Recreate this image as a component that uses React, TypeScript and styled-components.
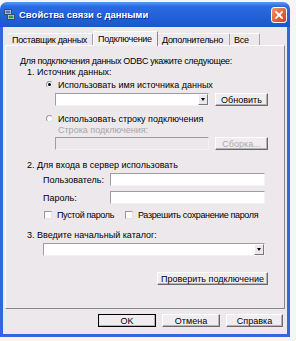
import styled, { createGlobalStyle } from 'styled-components'

const GlobalStyle = createGlobalStyle`
  html, body {
    margin: 0;
    padding: 0;
    background: #f6f4f6;
  }
  body {
    font-family: 'Liberation Sans', Arial, sans-serif;
    font-size: 9px;
    color: #000;
  }
`

const Page = styled.div`
  width: 296px;
  height: 341px;
  padding-top: 2px;
  box-sizing: border-box;
`

const Window = styled.div`
  width: 290px;
  height: 335px;
  display: flex;
  flex-direction: column;
`

const TitleBar = styled.div`
  height: 25px;
  flex: 0 0 25px;
  border-radius: 7px 7px 0 0;
  background: linear-gradient(180deg, #5a98f2 0%, #2c6ae0 18%, #2160d8 60%, #1c56cc 100%);
  display: flex;
  align-items: center;
  padding: 0 4px 0 4px;
  box-sizing: border-box;
`

const TitleText = styled.div`
  flex: 1 1 auto;
  margin-left: 4px;
  color: #fff;
  font-weight: bold;
  font-size: 9.5px;
  text-shadow: 1px 1px 0 #0c2f90;
`

const CloseButton = styled.div`
  width: 14px;
  height: 14px;
  border: 1px solid #fff;
  border-radius: 3px;
  background: linear-gradient(135deg, #f4946c 0%, #e4603a 55%, #cc4420 100%);
  display: flex;
  align-items: center;
  justify-content: center;
  margin-right: -1px;
`

const Body = styled.div`
  flex: 1 1 auto;
  background: #ece8ec;
  border: 3px solid #3466de;
  border-top: 0;
  display: flex;
  flex-direction: column;
  padding: 4px 2px 0 2px;
`

const TabRow = styled.div`
  display: flex;
  align-items: flex-end;
  height: 14px;
  margin-left: 3px;
  position: relative;
  z-index: 1;
  letter-spacing: -0.3px;
`

const Tab = styled.div<{ $active?: boolean; $width: number }>`
  width: ${(p) => p.$width}px;
  height: ${(p) => (p.$active ? 15 : 12)}px;
  margin-bottom: ${(p) => (p.$active ? -1 : 0)}px;
  padding: 0 3px 0 4px;
  display: flex;
  align-items: center;
  background: ${(p) => (p.$active ? '#f2eff2' : '#ece8ec')};
  border-top: 1px solid #fff;
  border-left: ${(p) => (p.$active ? '1px solid #fff' : '0')};
  border-right: 1px solid ${(p) => (p.$active ? '#8a878a' : '#a8a5a8')};
  box-sizing: border-box;
  white-space: nowrap;
  overflow: hidden;
`

const Panel = styled.div`
  height: 264px;
  border: 1px solid #fff;
  border-right-color: #8a878a;
  border-bottom-color: #8a878a;
  box-sizing: border-box;
  padding: 10px 16px 0 14px;
  display: flex;
  flex-direction: column;
`

const Line = styled.div<{ $indent?: number; $top?: number; $gray?: boolean; $tight?: boolean }>`
  height: 11px;
  line-height: 11px;
  margin-left: ${(p) => p.$indent ?? 0}px;
  margin-top: ${(p) => p.$top ?? 0}px;
  color: ${(p) => (p.$gray ? '#a9a6a9' : '#000')};
  letter-spacing: ${(p) => (p.$tight ? '-0.3px' : 'normal')};
  white-space: nowrap;
`

const Row = styled.div<{ $indent?: number; $top?: number; $right?: number }>`
  display: flex;
  align-items: center;
  gap: 6px;
  height: 13px;
  margin-left: ${(p) => p.$indent ?? 0}px;
  margin-right: ${(p) => p.$right ?? 0}px;
  margin-top: ${(p) => p.$top ?? 0}px;
`

const OptionRow = styled.label<{ $indent?: number; $top?: number; $tight?: boolean }>`
  display: flex;
  align-items: center;
  height: 11px;
  margin-left: ${(p) => p.$indent ?? 0}px;
  margin-top: ${(p) => p.$top ?? 0}px;
  letter-spacing: ${(p) => (p.$tight ? '-0.35px' : 'normal')};
  white-space: nowrap;
`

const Radio = styled.span<{ $checked?: boolean }>`
  flex: 0 0 auto;
  width: 7px;
  height: 7px;
  border-radius: 50%;
  background: #fff;
  border: 1px solid #9a979a;
  border-bottom-color: #e4e2e4;
  border-right-color: #e4e2e4;
  box-sizing: border-box;
  margin-right: 5px;
  display: flex;
  align-items: center;
  justify-content: center;

  &::after {
    content: '';
    width: 3px;
    height: 3px;
    border-radius: 50%;
    background: ${(p) => (p.$checked ? '#000' : 'transparent')};
  }
`

const Checkbox = styled.span<{ $gap?: number }>`
  flex: 0 0 auto;
  width: 8px;
  height: 8px;
  background: #fff;
  border: 1px solid #9a979a;
  border-bottom-color: #e4e2e4;
  border-right-color: #e4e2e4;
  box-sizing: border-box;
  margin-left: ${(p) => p.$gap ?? 0}px;
  margin-right: 5px;
`

const Field = styled.div<{ $disabled?: boolean }>`
  flex: 1 1 auto;
  height: 13px;
  background: ${(p) => (p.$disabled ? '#ece8ec' : '#fff')};
  border: 1px solid #a09da0;
  border-right-color: #f4f2f4;
  border-bottom-color: #f4f2f4;
  box-sizing: border-box;
  display: flex;
  justify-content: flex-end;
`

const DropArrow = styled.div`
  width: 10px;
  height: 11px;
  background: #ece8ec;
  border-left: 1px solid #fff;
  border-top: 1px solid #fff;
  border-right: 1px solid #7a777a;
  border-bottom: 1px solid #7a777a;
  box-sizing: border-box;
  display: flex;
  align-items: center;
  justify-content: center;

  &::after {
    content: '';
    border-left: 2.5px solid transparent;
    border-right: 2.5px solid transparent;
    border-top: 3px solid #000;
  }
`

const Button = styled.div<{ $width?: number; $disabled?: boolean; $default?: boolean }>`
  width: ${(p) => p.$width ?? 53}px;
  height: 13px;
  flex: 0 0 auto;
  padding: 0 4px;
  box-sizing: border-box;
  display: flex;
  align-items: center;
  justify-content: center;
  background: #f0edf0;
  color: ${(p) => (p.$disabled ? '#aaa7aa' : '#000')};
  border: 1px solid;
  border-color: ${(p) => (p.$default ? '#000' : '#fff #6c696c #6c696c #fff')};
  box-shadow: inset -1px -1px 0 #b6b3b6;
  white-space: nowrap;
`

const FieldLabel = styled.div`
  width: 61px;
  flex: 0 0 auto;
  white-space: nowrap;
`

const Actions = styled.div<{ $top?: number }>`
  display: flex;
  justify-content: flex-end;
  margin-top: ${(p) => p.$top ?? 0}px;
`

const Footer = styled.div`
  display: flex;
  justify-content: flex-end;
  gap: 6px;
  padding: 5px 2px 0 0;
`

const AppIcon = () => (
  <svg width="11" height="11" viewBox="0 0 11 11">
    <rect x="0.5" y="0.5" width="7" height="5" fill="#d8e4f4" stroke="#3a4a6a" />
    <rect x="1.5" y="1.5" width="5" height="3" fill="#4a78c8" />
    <rect x="3.5" y="5.5" width="7" height="5" fill="#e8ecf0" stroke="#3a4a6a" />
    <rect x="4.5" y="6.5" width="5" height="3" fill="#2a9a4a" />
  </svg>
)

const CloseIcon = () => (
  <svg width="8" height="8" viewBox="0 0 8 8">
    <path d="M1 1 L7 7 M7 1 L1 7" stroke="#fff" strokeWidth="1.8" strokeLinecap="square" />
  </svg>
)

const App = () => {
  return (
    <Page>
      <GlobalStyle />
      <Window>
        <TitleBar>
          <AppIcon />
          <TitleText>Свойства связи с данными</TitleText>
          <CloseButton>
            <CloseIcon />
          </CloseButton>
        </TitleBar>
        <Body>
          <TabRow>
            <Tab $width={85}>Поставщик данных</Tab>
            <Tab $width={65} $active>
              Подключение
            </Tab>
            <Tab $width={72}>Дополнительно</Tab>
            <Tab $width={30}>Все</Tab>
          </TabRow>
          <Panel>
            <Line $tight>Для подключения данных ODBC укажите следующее:</Line>
            <Line $indent={7}>1. Источник данных:</Line>
            <OptionRow $indent={26} $top={1}>
              <Radio $checked />
              Использовать имя источника данных
            </OptionRow>
            <Row $indent={35} $top={3}>
              <Field>
                <DropArrow />
              </Field>
              <Button>Обновить</Button>
            </Row>
            <OptionRow $indent={26} $top={7}>
              <Radio />
              Использовать строку подключения
            </OptionRow>
            <Line $indent={38} $top={1} $gray>
              Строка подключения:
            </Line>
            <Row $indent={35} $top={1}>
              <Field $disabled />
              <Button $disabled>Сборка...</Button>
            </Row>
            <Line $indent={7} $top={10}>
              2. Для входа в сервер использовать
            </Line>
            <Row $indent={23} $right={3} $top={2}>
              <FieldLabel>Пользователь:</FieldLabel>
              <Field />
            </Row>
            <Row $indent={23} $right={3} $top={5}>
              <FieldLabel>Пароль:</FieldLabel>
              <Field />
            </Row>
            <OptionRow $indent={24} $top={5} $tight>
              <Checkbox />
              Пустой пароль
              <Checkbox $gap={11} />
              Разрешить сохранение пароля
            </OptionRow>
            <Line $indent={7} $top={10}>
              3. Введите начальный каталог:
            </Line>
            <Row $indent={23} $right={3} $top={2}>
              <Field>
                <DropArrow />
              </Field>
            </Row>
            <Actions $top={16}>
              <Button $width={111}>Проверить подключение</Button>
            </Actions>
          </Panel>
          <Footer>
            <Button $width={58} $default>
              OK
            </Button>
            <Button $width={58}>Отмена</Button>
            <Button $width={57}>Справка</Button>
          </Footer>
        </Body>
      </Window>
    </Page>
  )
}

export default App
